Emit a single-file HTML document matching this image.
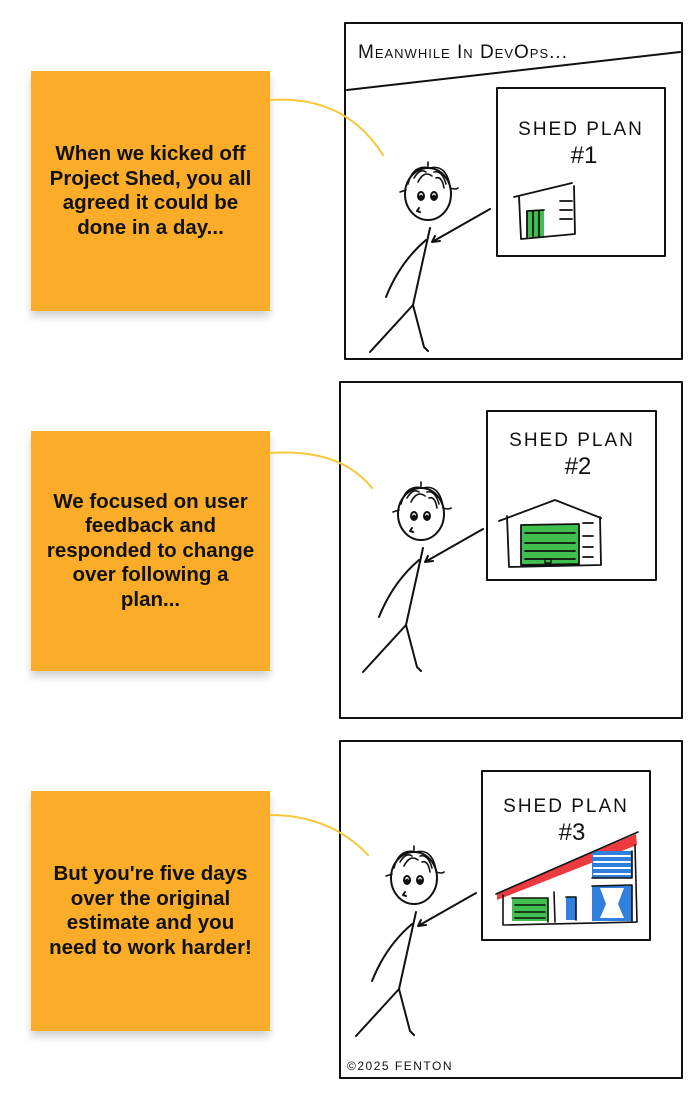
<!DOCTYPE html>
<html><head><meta charset="utf-8"><style>
html,body{margin:0;padding:0;background:#fff;width:700px;height:1103px;overflow:hidden;position:relative;font-family:"Liberation Sans",sans-serif}
.note{position:absolute;left:31px;width:239px;height:240px;background:#FBAD29;box-shadow:0 6px 8px rgba(0,0,0,0.18);display:flex;align-items:center;justify-content:center;text-align:center;font-weight:bold;font-size:20.5px;line-height:24.5px;color:#111;box-sizing:border-box;padding:0 4px}
svg{position:absolute;left:0;top:0}
.hand{font-family:"Liberation Sans",sans-serif;fill:#111}
</style></head><body>
<div class="note" style="top:71px">When we kicked off<br>Project Shed, you all<br>agreed it could be<br>done in a day...</div>
<div class="note" style="top:431px">We focused on user<br>feedback and<br>responded to change<br>over following a<br>plan...</div>
<div class="note" style="top:791px">But you're five days<br>over the original<br>estimate and you<br>need to work harder!</div>
<svg width="700" height="1103" viewBox="0 0 700 1103" fill="none" stroke="#111" stroke-width="2" stroke-linecap="round" stroke-linejoin="round">
<defs>
<g id="fig">
<ellipse cx="0" cy="2" rx="23" ry="26"/>
<path d="M-20,-8 Q-15,-28 2,-24 Q18,-28 22,-6 M-14,-14 Q-8,-24 -2,-20 M-10,-10 Q-4,-22 4,-16 M6,-20 Q14,-22 18,-8 M8,-14 Q14,-16 16,-4 M-22,-2 l-6,2 M22,-4 q6,2 8,0 M0,-26 l0,-4" stroke-width="1.6"/>
<ellipse cx="-7" cy="4" rx="3" ry="4"/><ellipse cx="6" cy="4" rx="3" ry="4"/>
<circle cx="-7" cy="5" r="1.2" fill="#111"/><circle cx="6" cy="5" r="1.2" fill="#111"/>
<path d="M-9,16 l-2,3 l3,1"/>
<path d="M2,36 L-15,113"/>
<path d="M-2,48 Q-28,70 -42,105"/>
<path d="M-15,113 L-58,160 M-15,113 L-4,155 l4,4"/>
<path d="M62,17 L4,50 m0,0 l8,-1 m-8,1 l3,-6"/>
</g>
</defs>
<rect x="345" y="23" width="337" height="336"/>
<path d="M347,90 L680,52"/>
<text x="358" y="58" class="hand" stroke="none" font-size="19" letter-spacing="1" style="font-variant:small-caps">Meanwhile In DevOps...</text>
<rect x="497" y="88" width="168" height="168"/>
<text x="581" y="135" text-anchor="middle" class="hand" stroke="none" font-size="19" letter-spacing="2">SHED PLAN</text>
<text x="584" y="163" text-anchor="middle" class="hand" stroke="none" font-size="24">#1</text>
<path d="M270,100 Q345,95 383,155" stroke="#F5C93A" stroke-width="2"/>
<rect x="527" y="210" width="17" height="27" fill="#3FBF4E" stroke="none"/>
<path d="M514,197 L572,183 M519,196 L521,239 L575,234 L574,186 M527,211 L527,237 M533,211 L533,236 M539,211 L539,236 M527,211 L544,210 M560,201 L572,201 M560,210 L572,210 M560,219 L572,219" stroke-width="1.8"/>
<use href="#fig" x="428" y="192"/>
<rect x="340" y="382" width="342" height="336"/>
<rect x="487" y="411" width="169" height="169"/>
<text x="572" y="446" text-anchor="middle" class="hand" stroke="none" font-size="19" letter-spacing="2">SHED PLAN</text>
<text x="578" y="474" text-anchor="middle" class="hand" stroke="none" font-size="24">#2</text>
<path d="M270,453 Q340,448 372,488" stroke="#F5C93A" stroke-width="2"/>
<rect x="521" y="525" width="58" height="40" fill="#3FBF4E" stroke="none"/>
<path d="M499,521 L555,500 L601,518 M507,516 L509,567 L601,565 L600,517 M521,525 L579,524 L579,564 L521,565 Z M525,533 L575,533 M525,543 L575,543 M525,551 L575,551 M525,559 L575,559 M583,523 L593,523 M583,536 L593,536 M583,547 L593,547 M583,557 L593,557" stroke-width="1.8"/>
<rect x="545" y="559" width="6" height="4" stroke-width="1.4"/>
<use href="#fig" x="421" y="512"/>
<rect x="340" y="741" width="342" height="337"/>
<rect x="482" y="771" width="168" height="169"/>
<text x="566" y="812" text-anchor="middle" class="hand" stroke="none" font-size="19" letter-spacing="2">SHED PLAN</text>
<text x="572" y="840" text-anchor="middle" class="hand" stroke="none" font-size="24">#3</text>
<path d="M270,815 Q330,815 368,855" stroke="#F5C93A" stroke-width="2"/>
<polygon points="497,893 636,834 637,845 497,900" fill="#EC3B40" stroke="none"/>
<rect x="592" y="851" width="40" height="27" fill="#2F7FDF" stroke="none"/>
<path d="M594,856 L630,856 M594,862 L630,862 M594,868 L630,868 M594,874 L630,874" stroke="#fff" stroke-width="2"/>
<rect x="592" y="886" width="40" height="35" fill="#2F7FDF" stroke="none"/>
<path d="M600,888 L624,888 L618,904 L624,918 L600,918 L606,904 Z" fill="#fff" stroke="none"/>
<rect x="566" y="897" width="10" height="23" fill="#2F7FDF" stroke="none"/>
<rect x="512" y="898" width="36" height="23" fill="#3FBF4E" stroke="none"/>
<path d="M496,894 L638,832 M503,895 L503,925 L637,922 L635,845 M512,898 L548,898 L548,922 M515,905 L545,905 M515,912 L545,912 M515,918 L545,918 M554,892 L555,922 M566,897 L576,897 L576,920 M592,886 L632,885 L632,921 M592,878 L632,878 L632,851" stroke-width="1.6"/>
<use href="#fig" x="414" y="876"/>
<text x="347" y="1070" class="hand" stroke="none" font-size="12" letter-spacing="1.5">©2025 FENTON</text>
</svg>
</body></html>
